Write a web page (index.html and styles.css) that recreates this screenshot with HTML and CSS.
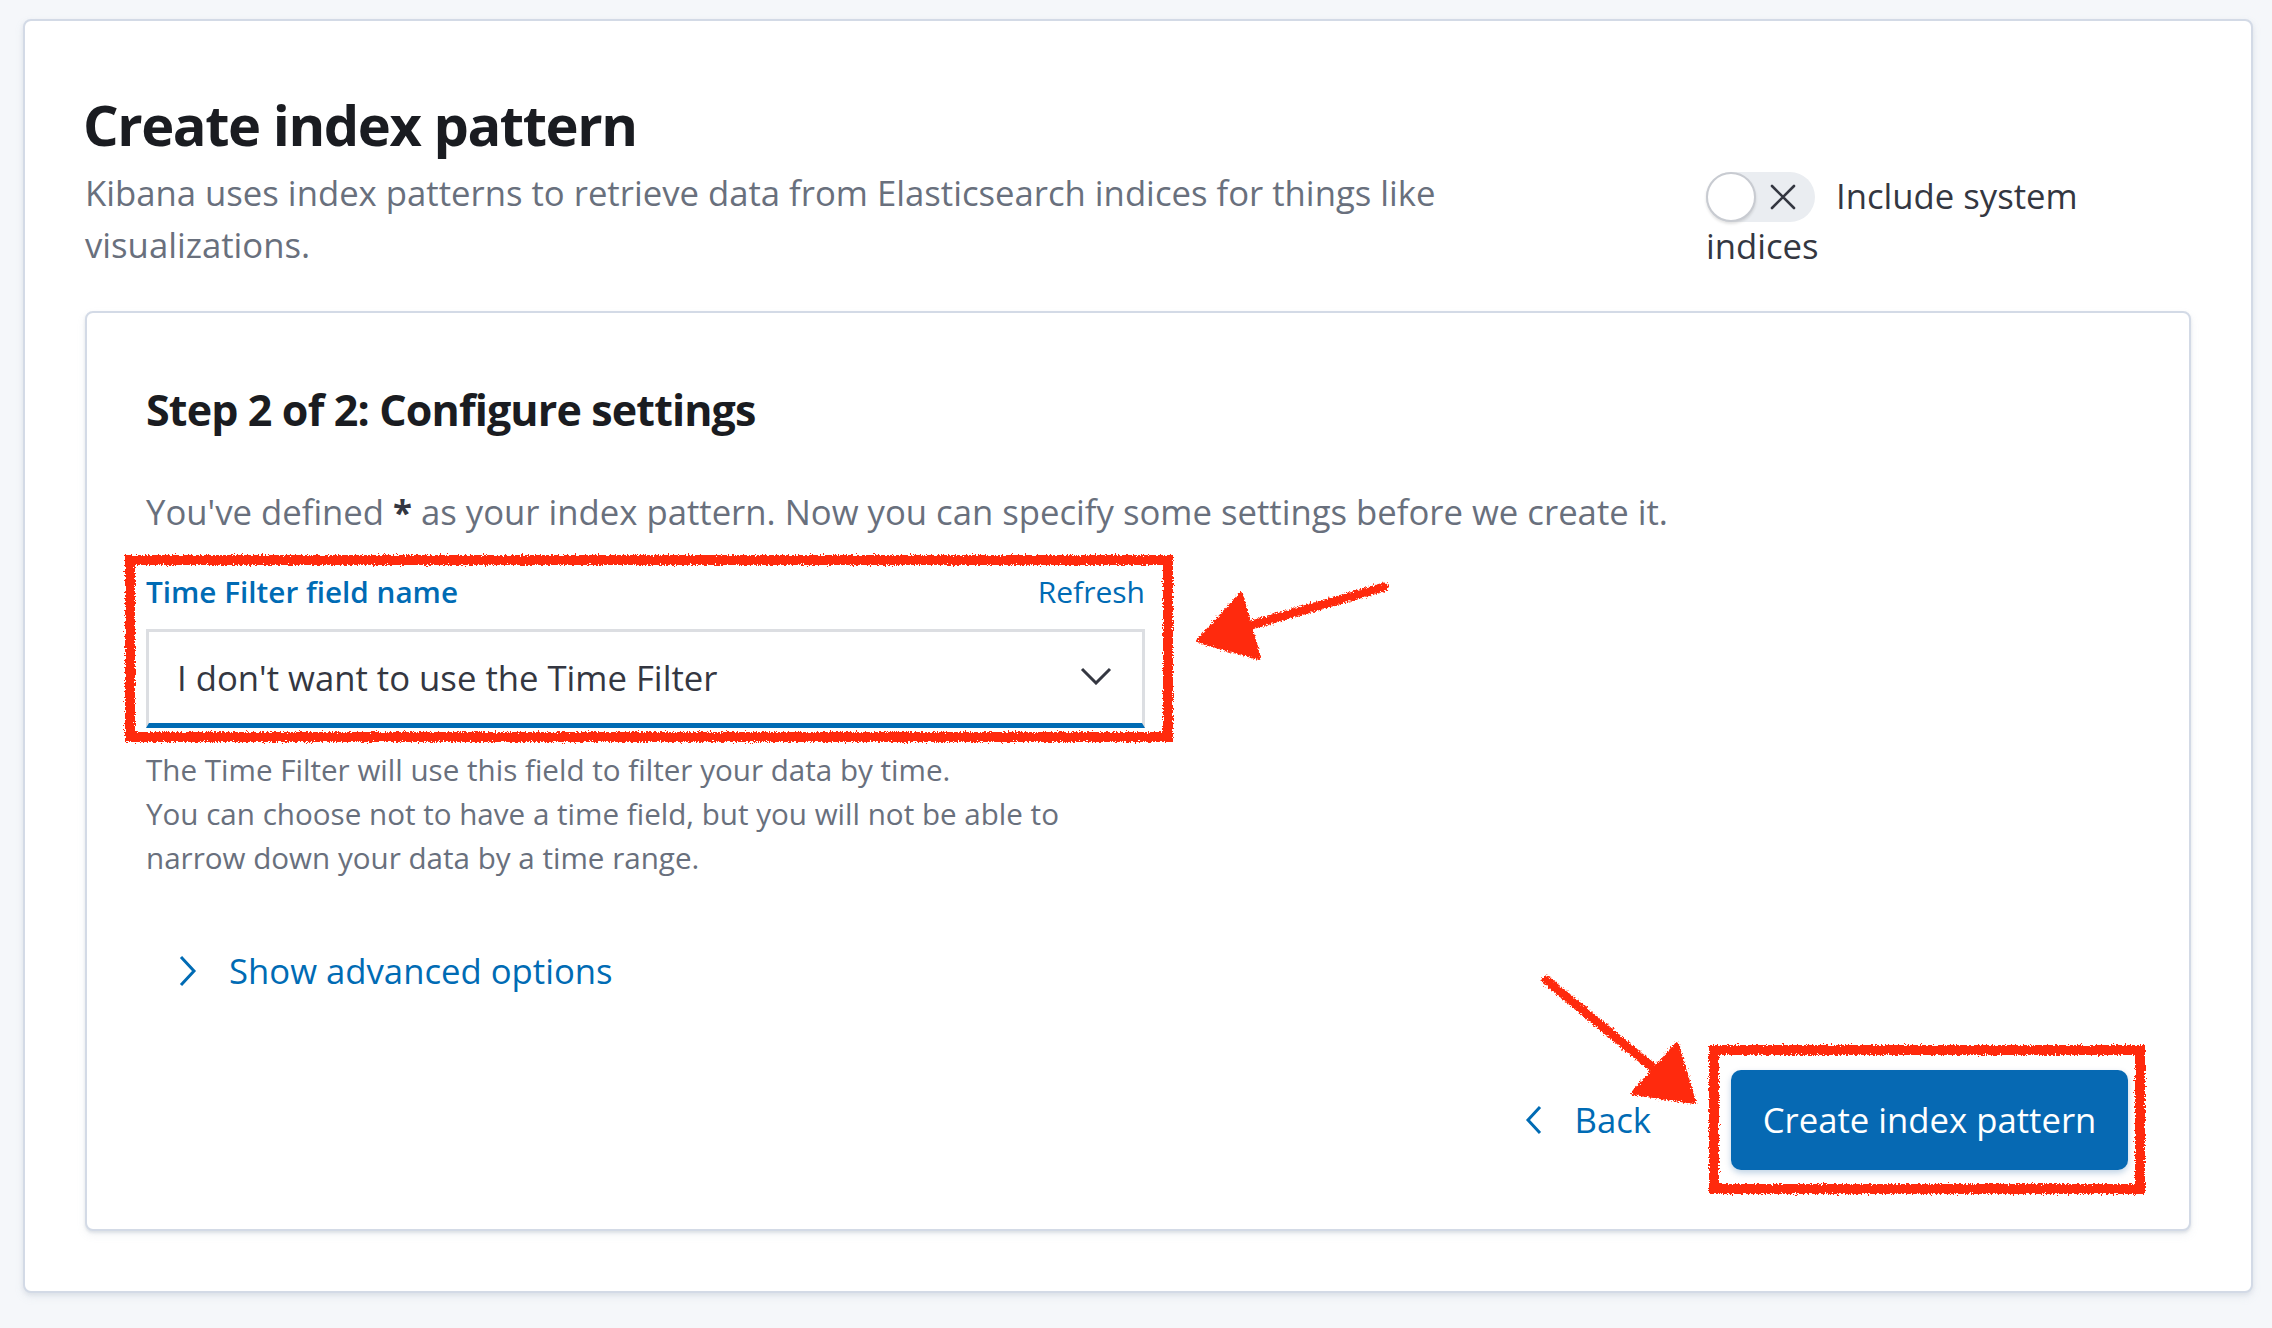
FILE: index.html
```html
<!DOCTYPE html>
<html lang="en">
<head>
<meta charset="utf-8">
<title>Create index pattern</title>
<link rel="stylesheet" href="styles.css">
</head>
<body>
<div class="page">
  <div class="panel">
    <div class="header">
      <div class="header-text">
        <h1 class="title">Create index pattern</h1>
        <p class="subtitle">Kibana uses index patterns to retrieve data from Elasticsearch indices for things like visualizations.</p>
      </div>
      <div class="header-switch">
        <span class="switch">
          <span class="switch-thumb"></span>
          <svg class="switch-x" width="26" height="26" viewBox="0 0 26 26"><path d="M2 2 L24 24 M24 2 L2 24" stroke="#343741" stroke-width="2.6" fill="none" stroke-linecap="round"/></svg>
        </span><span class="switch-label">Include system indices</span>
      </div>
    </div>

    <div class="card">
      <h2 class="step-title">Step 2 of 2: Configure settings</h2>
      <p class="step-desc">You've defined <strong>*</strong> as your index pattern. Now you can specify some settings before we create it.</p>

      <div class="form-row">
        <div class="label-row">
          <span class="label">Time Filter field name</span>
          <span class="link-small">Refresh</span>
        </div>
        <div class="select">
          <span class="select-value">I don't want to use the Time Filter</span>
          <svg class="select-arrow" width="32" height="18" viewBox="0 0 32 18"><path d="M2 2 L16 16 L30 2" stroke="#343741" stroke-width="3" fill="none" stroke-linejoin="miter"/></svg>
        </div>
        <div class="help">
          <span class="help-line">The Time Filter will use this field to filter your data by time.</span>
          <span class="help-line">You can choose not to have a time field, but you will not be able to narrow down your data by a time range.</span>
        </div>
      </div>

      <div class="advanced">
        <svg class="advanced-arrow" width="18" height="32" viewBox="0 0 18 32"><path d="M2 2 L15 16 L2 30" stroke="#006bb4" stroke-width="3" fill="none"/></svg>
        <span class="advanced-text">Show advanced options</span>
      </div>

      <div class="actions">
        <span class="back">
          <svg class="back-arrow" width="17" height="30" viewBox="0 0 17 30"><path d="M15 2 L3 15 L15 28" stroke="#006bb4" stroke-width="3" fill="none"/></svg>
          <span class="back-text">Back</span>
        </span>
        <button class="primary" type="button">Create index pattern</button>
      </div>
    </div>
  </div>

  <svg class="annotations" width="2272" height="1328" viewBox="0 0 2272 1328">
    <defs>
      <filter id="rough" x="-5%" y="-5%" width="110%" height="110%">
        <feTurbulence type="fractalNoise" baseFrequency="0.6" numOctaves="2" seed="3" result="noise"/>
        <feDisplacementMap in="SourceGraphic" in2="noise" scale="6" xChannelSelector="R" yChannelSelector="G"/>
      </filter>
    </defs>
    <g filter="url(#rough)" stroke="#ff2a0a" fill="none">
      <rect x="130" y="560" width="1038" height="177" stroke-width="10"/>
      <rect x="1714" y="1050" width="426" height="139" stroke-width="10"/>
      <path d="M1384 587 L1248 626" stroke-width="9" stroke-linecap="round"/>
      <path d="M1546 980 L1652 1067" stroke-width="9" stroke-linecap="round"/>
    </g>
    <g filter="url(#rough)" fill="#ff2a0a" stroke="#ff2a0a" stroke-width="4" stroke-linejoin="round">
      <polygon points="1198,641 1241,594 1259,658"/>
      <polygon points="1694,1102 1633,1093 1677,1044"/>
    </g>
  </svg>
</div>
</body>
</html>
```

FILE: styles.css
```css
html {
  background: #f5f7fa;
}

body {
  margin: 0;
  font-family: "Open Sans", "Liberation Sans", sans-serif;
  color: #343741;
}

.page {
  position: relative;
  padding: 19px 19px 37px 23px;
}

.panel {
  background: #ffffff;
  border: 2px solid #d3dae6;
  border-radius: 8px;
  box-shadow: 0 2px 4px rgba(152, 162, 179, 0.18), 0 4px 10px rgba(152, 162, 179, 0.12);
  padding: 60px;
}

/* Header */
.header {
  display: flex;
  justify-content: space-between;
  align-items: flex-end;
}

.header-text {
  width: 1560px;
}

.title {
  margin: 0 0 0 -2px;
  font-size: 56px;
  line-height: 86px;
  font-weight: 700;
  color: #1a1c21;
  letter-spacing: -1.45px;
}

.subtitle {
  margin: 0;
  font-size: 34.7px;
  line-height: 52px;
  color: #69707d;
}

.header-switch {
  width: 485px;
  margin-bottom: 1px;
  font-size: 34.7px;
  line-height: 48px;
  color: #343741;
}

.switch {
  position: relative;
  display: inline-block;
  vertical-align: -12.6px;
  width: 109px;
  height: 50px;
  border-radius: 25px;
  background: #eaedf1;
  margin-right: 21px;
}

.switch-thumb {
  position: absolute;
  left: 0;
  top: 0;
  width: 46px;
  height: 46px;
  border-radius: 50%;
  background: #ffffff;
  border: 2px solid #c8cbd1;
  box-shadow: 0 2px 3px rgba(0, 0, 0, 0.12);
}

.switch-x {
  position: absolute;
  left: 64px;
  top: 12px;
}

/* Card */
.card {
  margin-top: 40px;
  background: #ffffff;
  border: 2px solid #d3dae6;
  border-radius: 8px;
  box-shadow: 0 2px 3px rgba(152, 162, 179, 0.25), 0 4px 8px rgba(152, 162, 179, 0.12);
  padding: 59px 61px 59px 59px;
}

.step-title {
  margin: 0;
  font-size: 43px;
  line-height: 75px;
  font-weight: 700;
  color: #1a1c21;
  letter-spacing: -0.86px;
}

.step-desc {
  margin: 39px 0 0;
  font-size: 34.7px;
  line-height: 52px;
  color: #69707d;
}

.step-desc strong {
  color: #343741;
  font-weight: 700;
}

.form-row {
  width: 999px;
  margin-top: 32px;
}

.label-row {
  display: flex;
  justify-content: space-between;
  align-items: baseline;
  font-size: 29.7px;
  line-height: 44px;
}

.label {
  font-weight: 600;
  color: #006bb4;
}

.link-small {
  color: #006bb4;
  font-size: 30px;
}

.select {
  box-sizing: border-box;
  margin-top: 15px;
  height: 99px;
  display: flex;
  align-items: center;
  justify-content: space-between;
  background: #ffffff;
  border: 3px solid #dcdee2;
  border-bottom: 5px solid #006bb4;
  padding: 0 30px 0 28px;
}

.select-value {
  font-size: 34.7px;
  line-height: 52px;
  color: #343741;
}

.select-arrow {
  display: block;
  margin-top: -4px;
}

.help {
  margin-top: 20px;
  font-size: 29.6px;
  line-height: 44px;
  color: #69707d;
}

.help-line {
  display: block;
}

.advanced {
  margin-top: 65px;
  display: flex;
  align-items: center;
  padding-left: 33px;
  font-size: 34.7px;
  line-height: 52px;
  color: #006bb4;
}

.advanced-arrow {
  display: block;
  margin-right: 32px;
}

.actions {
  margin-top: 73px;
  display: flex;
  justify-content: flex-end;
  align-items: center;
  gap: 80px;
}

.back {
  display: flex;
  align-items: center;
  gap: 32px;
  font-size: 34.7px;
  line-height: 52px;
  color: #006bb4;
}

.back-arrow {
  display: block;
}

.primary {
  width: 397px;
  height: 100px;
  border: none;
  border-radius: 10px;
  background: #0669b3;
  color: #ffffff;
  font-family: "Open Sans", "Liberation Sans", sans-serif;
  font-size: 34.7px;
  line-height: 52px;
  box-shadow: 0 3px 6px rgba(0, 80, 150, 0.25);
  padding: 0;
}

/* Annotation overlay */
.annotations {
  position: absolute;
  left: 0;
  top: 0;
  pointer-events: none;
}
```
